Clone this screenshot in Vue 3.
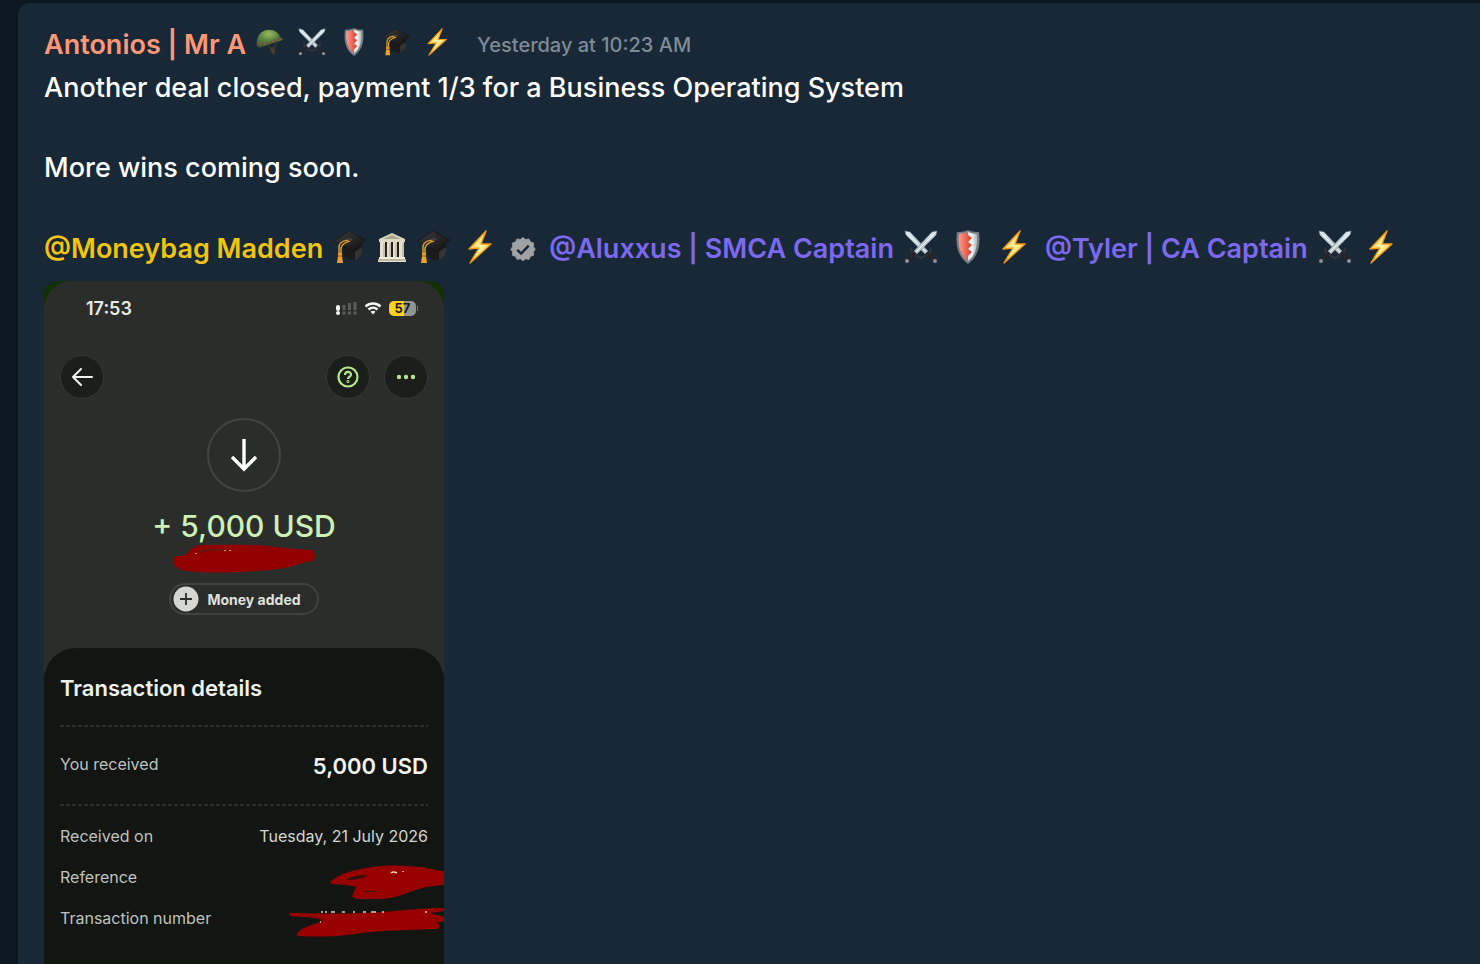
<template>
  <div class="chat">
    <!-- 图标定义 -->
    <svg class="sprite" aria-hidden="true">
      <defs>
        <linearGradient id="boltFill" x1="0" y1="0" x2="1" y2="1">
          <stop offset="0" stop-color="#ffb52b" />
          <stop offset="0.5" stop-color="#fff6a8" />
          <stop offset="1" stop-color="#ffb01e" />
        </linearGradient>
        <linearGradient id="bladeFill" x1="0" y1="0" x2="0" y2="1">
          <stop offset="0" stop-color="#d5e6ee" />
          <stop offset="1" stop-color="#b4bcc3" />
        </linearGradient>
        <linearGradient id="redFill" x1="0" y1="0" x2="1" y2="0">
          <stop offset="0" stop-color="#ff9a8c" />
          <stop offset="1" stop-color="#d93a2a" />
        </linearGradient>
        <linearGradient id="silverFill" x1="0" y1="0" x2="1" y2="0">
          <stop offset="0.3" stop-color="#b9bfc3" />
          <stop offset="0.7" stop-color="#f4f8fa" />
          <stop offset="1" stop-color="#a8b0b5" />
        </linearGradient>
        <linearGradient id="capFill" x1="0" y1="0" x2="1" y2="1">
          <stop offset="0" stop-color="#3b3b3b" />
          <stop offset="1" stop-color="#111" />
        </linearGradient>
        <radialGradient id="helmetFill" cx="0.45" cy="0.25" r="0.75">
          <stop offset="0" stop-color="#9dba66" />
          <stop offset="0.45" stop-color="#5c8740" />
          <stop offset="1" stop-color="#38592f" />
        </radialGradient>
      </defs>

      <symbol id="helmet" viewBox="0 0 34 34">
        <path d="M14 21l5 6M25 18l-4 9" stroke="#4a3c33" stroke-width="1.2" fill="none" />
        <path d="M17 24l4-1 2 4v4l-3 1-2-4z" fill="#4b3b32" />
        <path d="M1 21C0 10 6 2 16 2c7 0 12 4 13 9l4 3c-1 1-4 2-8 3-7 2-12 4-18 6-3 1-5 1-6-2z" fill="url(#helmetFill)" />
        <path d="M1 18c10 1 19-1 28-8l1 3c-8 6-18 9-29 8z" fill="#65563f" />
        <path d="M5 18l1 2M10 18l1 2M15 17l1 2M20 15l1 2M25 13l1 2" stroke="#8d7a5b" stroke-width="1" />
      </symbol>

      <symbol id="swords" viewBox="0 0 34 34">
        <path d="M7 18l1 5 5 3 4 2M27 18l-1 5-5 3-4 2" fill="none" stroke="#34343a" stroke-width="2.2" />
        <path d="M11 23l-8 8M23 23l8 8" stroke="#26252a" stroke-width="3.4" />
        <path d="M1 1l5 1 18 19-3 3L2 5z" fill="url(#bladeFill)" stroke="#7e8c97" stroke-width="0.5" />
        <path d="M2 2l20 20" stroke="#f6fbff" stroke-width="1" />
        <path d="M33 1l-5 1L10 21l3 3L32 5z" fill="url(#bladeFill)" stroke="#7e8c97" stroke-width="0.5" />
        <path d="M32 2L12 22" stroke="#f6fbff" stroke-width="1" />
        <circle cx="3" cy="31" r="2" fill="#918d92" />
        <circle cx="31" cy="31" r="2" fill="#918d92" />
      </symbol>

      <symbol id="shield" viewBox="0 0 34 34">
        <path d="M17 0c4 2 8 2 11 2 2 16-2 25-11 32C8 27 4 18 6 2c3 0 7 0 11-2z" fill="#777f82" />
        <path d="M17 2c3 1 6 2 9 2 1 14-2 21-9 27C10 25 7 18 8 4c3 0 6-1 9-2z" fill="url(#silverFill)" />
        <path d="M17 2v3l4 3-4 4 4 3-4 4 4 3-4 4v5C10 25 7 18 8 4c3 0 6-1 9-2z" fill="url(#redFill)" />
      </symbol>

      <symbol id="cap" viewBox="0 0 34 34">
        <path d="M10 16l19-2v9c-1 3-5 7-9 7-5 0-9-3-10-7z" fill="#1a1a1a" />
        <path d="M22 22l7-5v6c-1 3-4 6-7 7z" fill="#343434" />
        <path d="M16 1l17 9-13 11L1 11z" fill="url(#capFill)" stroke="#0c0c0c" stroke-width="0.5" />
        <path d="M17 10c-5 0-10 2-11 6v8M17 11c-4 1-8 3-9 7v6" fill="none" stroke="#d99b2c" stroke-width="1.5" />
        <ellipse cx="17" cy="9.5" rx="2.6" ry="1.4" fill="#3f3f3f" />
        <path d="M5 23h4v3l1 7H4l1-7z" fill="#ee9f28" />
        <path d="M5 26h4" stroke="#a35f11" stroke-width="1" />
      </symbol>

      <symbol id="bank" viewBox="0 0 34 34">
        <path d="M6 12h22v17H6z" fill="#25201b" />
        <path d="M17 3l13 6v3H4V9z" fill="#dcd8c1" />
        <path d="M17 5l9 4H8z" fill="#a9a489" />
        <path d="M5 12h5v16H5zM12 12h4v16h-4zM18 12h4v16h-4zM24 12h5v16h-5z" fill="#e4e0cc" />
        <path d="M9 13v14M15 13v14M21 13v14M28 13v14" stroke="#aaa58e" stroke-width="1" />
        <path d="M4 27h26v2H4z" fill="#f0edda" />
        <path d="M3 29h28v2H3z" fill="#bdb89f" />
        <path d="M3 31h28v1H3z" fill="#e6e2ce" />
      </symbol>

      <symbol id="bolt" viewBox="0 0 34 34">
        <path d="M22 1L5 19l10-1L6 33l21-19-10 0z" fill="url(#boltFill)" stroke="#f59a13" stroke-width="1.4" stroke-linejoin="round" />
      </symbol>

      <symbol id="verified" viewBox="0 0 34 34">
        <path
          d="M17 2l3.500 2.700 4.300-.9 2 3.900 4.200 1.500-.4 4.500L33 17.500l-2.400 3.300.4 4.300-4.200 1.600-2 4-4.300-.9L17 32.500l-3.500-2.700-4.300.9-2-4-4.200-1.600.4-4.300L1 17.500l2.400-3.800L3 9.200l4.200-1.500 2-3.900 4.300.9z"
          fill="#a0a2a4"
          stroke="#a0a2a4"
          stroke-linejoin="round"
        />
        <path d="M9.500 18l5 5L24.500 12.500" fill="none" stroke="#182837" stroke-width="3.200" />
      </symbol>
    </svg>

    <article class="message">
      <header class="message-header">
        <a href="#" class="author">Antonios | Mr A</a>
        <span class="badges">
          <svg v-for="icon in authorBadges" :key="icon" class="badge" aria-hidden="true">
            <use :href="`#${icon}`" />
          </svg>
        </span>
        <time class="timestamp">Yesterday at 10:23 AM</time>
      </header>

      <p class="line">Another deal closed, payment 1/3 for a Business Operating System</p>
      <p class="line spaced">More wins coming soon.</p>

      <!-- 提及的成员 -->
      <div class="mentions">
        <div v-for="user in mentions" :key="user.name" class="mention">
          <a href="#" :class="['mention-name', user.role]">{{ user.name }}</a>
          <div class="emoji-list">
            <span v-for="(group, g) in user.icons" :key="g" class="emoji-group">
              <svg v-for="(icon, i) in group" :key="i" class="emoji" :class="icon" aria-hidden="true">
                <use :href="`#${icon}`" />
              </svg>
            </span>
          </div>
        </div>
      </div>

      <!-- 手机截图附件 -->
      <section class="attachment">
        <div class="phone">
          <div class="status-bar">
            <span class="clock">17:53</span>
            <div class="status-icons">
              <svg width="21" height="14" viewBox="0 0 21 14">
                <path d="M2 6v2" stroke="#f5f5f5" stroke-width="4" stroke-linecap="round" />
                <circle cx="2" cy="12" r="2" fill="#f5f5f5" />
                <path d="M8 4v5M13.500 2v7M19 1v8M8 10.500v3M13.500 10.500v3M19 10.500v3" stroke="#5c5e5b" stroke-width="3" />
              </svg>
              <svg width="18" height="14" viewBox="0 0 18 14">
                <path d="M1.500 5.500c4.300-4 10.700-4 15 0M4.500 8.500c2.600-2.400 6.400-2.400 9 0" fill="none" stroke="#f5f5f5" stroke-width="2.400" />
                <path d="M6.500 10.800c1.500-1.300 3.500-1.300 5 0L9 13.500z" fill="#f5f5f5" />
              </svg>
              <span class="battery">57</span>
            </div>
          </div>

          <nav class="toolbar">
            <button type="button" class="round-button" aria-label="Back">
              <svg width="22" height="20" viewBox="0 0 22 20">
                <path d="M10 2l-8 8 8 8M2 10h19" fill="none" stroke="#f2f4f0" stroke-width="2" stroke-linecap="round" stroke-linejoin="round" />
              </svg>
            </button>
            <button type="button" class="round-button help" aria-label="Help">
              <svg width="22" height="22" viewBox="0 0 22 22" fill="none" stroke="#b5e68d" stroke-width="2.200">
                <circle cx="11" cy="11" r="9.500" />
                <path d="M8 9c0-4 6-4 6-.5 0 2.300-3 2.200-3 4.500" />
                <circle cx="11" cy="15.500" r="0.500" />
              </svg>
            </button>
            <button type="button" class="round-button" aria-label="More">
              <svg width="20" height="6" viewBox="0 0 20 6" fill="#b5e68d">
                <circle cx="3" cy="3" r="2.200" />
                <circle cx="10" cy="3" r="2.200" />
                <circle cx="17" cy="3" r="2.200" />
              </svg>
            </button>
          </nav>

          <div class="summary">
            <div class="direction">
              <svg width="28" height="34" viewBox="0 0 28 34">
                <path d="M14 1v30M2 19l12 12 12-12" fill="none" stroke="#fff" stroke-width="3.400" />
              </svg>
            </div>
            <div class="amount">+ 5,000 USD</div>
            <svg class="scribble" width="142" height="29" viewBox="0 0 142 29">
              <path
                d="M1 13c4-2 9 0 13-3 4-6 9-9 16-9 19 0 43-1 64 1 14 2 30 3 45 4 4 3 3 9 1 11-6 0-10 2-17 4-16 5-35 6-57 7-20 1-43 1-56-2C3 24-1 20 1 13z"
                fill="#930000"
              />
              <path d="M24 8c8-4 21-3 34-2-12 1-23 0-34 3z" fill="#5a1a10" />
              <path d="M23 9v1M52 6v1M57 6v1" stroke="#d8c7a8" stroke-width="1.500" />
            </svg>
            <div class="pill">
              <svg width="26" height="26" viewBox="0 0 26 26">
                <circle cx="13" cy="13" r="12.500" fill="#d5d7d4" />
                <path d="M13 7v12M7 13h12" stroke="#2c2e2b" stroke-width="1.800" />
              </svg>
              Money added
            </div>
          </div>

          <div class="sheet">
            <h2 class="sheet-title">Transaction details</h2>
            <hr class="divider" />
            <dl class="received">
              <dt>You received</dt>
              <dd>5,000 USD</dd>
            </dl>
            <hr class="divider" />
            <dl class="details">
              <div class="detail-row">
                <dt>Received on</dt>
                <dd>Tuesday, 21 July 2026</dd>
              </div>
              <div class="detail-row">
                <dt>Reference</dt>
                <dd class="redacted">
                  <svg width="114" height="34" viewBox="0 0 114 34">
                    <path
                      d="M1 16C10 8 27 4 43 2c22-3 42-1 54 1 6 2 13 3 17 3v14c-8 1-16 1-22 3-12 3-24 10-39 11-10 1-21 1-30-1-2-4 2-7 3-11-8-3-17-2-24-3-2-1-2-2-1-3z"
                      fill="#980000"
                    />
                    <path d="M16 15c5-4 13-5 22-5-6 4-14 5-22 5z" fill="#2b120d" />
                    <path d="M33 27c4-2 10-1 16-1-6 2-11 1-16 1z" fill="#4e0d08" />
                    <path d="M61 8c2-2 4-1 6 0M73 6v1" stroke="#e4d8c4" stroke-width="1.500" fill="none" />
                  </svg>
                </dd>
              </div>
              <div class="detail-row">
                <dt>Transaction number</dt>
                <dd class="redacted">
                  <svg width="156" height="34" viewBox="0 0 156 34">
                    <path
                      d="M1 8c1-2 4-1 7-1 30 1 65 1 98-2 14-1 33-3 50-3v3l-14 2 14 4v4l-8 2c5 1 4 6 1 6-28 1-58 1-83 5-17 3-38 3-56 2-3-2 2-6 6-8 6-3 13-4 18-8-8-4-22-2-32-4z"
                      fill="#980000"
                    />
                    <path d="M33 6h2M37 6h2M43 6h4M54 6h3M65 6h2M75 6h3M83 6h5M94 6h2M137 6h2M32 16h1" stroke="#d9cdbb" stroke-width="1.500" />
                  </svg>
                </dd>
              </div>
            </dl>
          </div>
        </div>
      </section>
    </article>
  </div>
</template>

<script setup>
// 作者徽章
const authorBadges = ['helmet', 'swords', 'shield', 'cap', 'bolt'];

// 提及列表，图标按间距分组
const mentions = [
  { name: '@Moneybag Madden', role: 'gold', icons: [['cap', 'bank', 'cap'], ['bolt', 'verified']] },
  { name: '@Aluxxus | SMCA Captain', role: 'violet', icons: [['swords'], ['shield'], ['bolt']] },
  { name: '@Tyler | CA Captain', role: 'violet', icons: [['swords'], ['bolt']] }
];
</script>

<style>
body {
  margin: 0;
  background: #0c1722;
}
</style>

<style scoped>
.chat {
  box-sizing: border-box;
  min-height: 100vh;
  padding: 3px 0 0 18px;
  display: flex;
  background: #0c1722;
  font-family: Inter, "Liberation Sans", sans-serif;
  color: #fff;
}

.sprite {
  position: absolute;
  width: 0;
  height: 0;
}

.message {
  flex: 1;
  min-width: 0;
  display: flex;
  flex-direction: column;
  padding: 20px 26px 0;
  background: #182837;
  border-top-left-radius: 12px;
}

.message-header {
  display: flex;
  align-items: center;
  height: 42px;
  margin-bottom: 3px;
}

.author {
  font-size: 27px;
  font-weight: 600;
  color: #ff9776;
  text-decoration: none;
  white-space: nowrap;
}

.badges {
  display: flex;
  gap: 14px;
  margin: 0 25px 4px 10px;
}

.badge {
  width: 28px;
  height: 28px;
}

.timestamp {
  padding-top: 2px;
  font-size: 20px;
  font-weight: 500;
  color: #7f8b95;
}

.line {
  margin: 0;
  font-size: 27px;
  font-weight: 500;
  line-height: 40px;
}

.spaced {
  margin: 40px 0;
}

.mentions {
  display: flex;
  gap: 13px;
}

.mention {
  display: flex;
  align-items: center;
  height: 40px;
  gap: 10px;
}

.mention-name {
  font-size: 27px;
  font-weight: 600;
  text-decoration: none;
  white-space: nowrap;
}

.gold {
  color: #f1c40f;
}

.violet {
  color: #7d69f0;
}

.emoji-list {
  display: flex;
  gap: 13px;
  padding-bottom: 3px;
}

.emoji-group {
  display: flex;
  align-items: center;
  gap: 8px;
}

.emoji {
  width: 34px;
  height: 34px;
}

.emoji.verified {
  box-sizing: border-box;
  width: 30px;
  height: 30px;
  padding: 4px 0 0 4px;
}

.attachment {
  flex: 1;
  display: flex;
  width: 400px;
  max-width: 100%;
  margin-top: 13px;
  background: #123000;
  border-radius: 14px 14px 0 0;
  overflow: hidden;
}

.phone {
  flex: 1;
  display: flex;
  flex-direction: column;
  background: #2b2d2a;
  border-radius: 28px 28px 0 0;
}

.status-bar {
  display: flex;
  justify-content: space-between;
  align-items: center;
  height: 54px;
  padding: 0 26px 0 42px;
}

.clock {
  font-size: 18px;
  font-weight: 600;
  color: #e8eae6;
}

.status-icons {
  display: flex;
  align-items: center;
  gap: 7px;
}

.battery {
  position: relative;
  width: 27px;
  height: 15px;
  margin-right: 2px;
  border-radius: 5px;
  background: linear-gradient(90deg, #ffd21f 57%, #929491 57%);
  color: #1c1c14;
  font-size: 13px;
  font-weight: 700;
  line-height: 15px;
  text-align: center;
}

.battery::after {
  content: "";
  position: absolute;
  top: 5px;
  right: -2px;
  width: 1px;
  height: 5px;
  background: #747673;
}

.toolbar {
  display: flex;
  gap: 14px;
  padding: 20px 16px 0;
}

.round-button {
  box-sizing: border-box;
  display: flex;
  align-items: center;
  justify-content: center;
  width: 44px;
  height: 44px;
  padding: 0;
  border: 1px solid #353734;
  border-radius: 50%;
  background: #1c1e1b;
  cursor: pointer;
}

.round-button.help {
  margin-left: auto;
}

.summary {
  display: flex;
  flex-direction: column;
  align-items: center;
  padding: 19px 0 33px;
}

.direction {
  box-sizing: border-box;
  display: flex;
  align-items: center;
  justify-content: center;
  width: 74px;
  height: 74px;
  border: 2px solid #434542;
  border-radius: 50%;
}

.amount {
  margin-top: 16px;
  font-size: 30px;
  font-weight: 500;
  line-height: 36px;
  color: #cdf0b5;
}

.scribble {
  margin-bottom: 10px;
}

.pill {
  box-sizing: border-box;
  display: flex;
  align-items: center;
  gap: 8px;
  height: 32px;
  padding: 0 16px 0 2px;
  border: 2px solid #414340;
  border-radius: 16px;
  font-size: 14px;
  font-weight: 700;
  color: #dfe1dd;
}

.sheet {
  flex: 1;
  padding: 24px 16px 16px;
  border-radius: 32px 32px 0 0;
  background: #121512;
}

.sheet-title {
  margin: 0 0 21px;
  font-size: 22px;
  font-weight: 600;
  line-height: 32px;
  color: #eef0ec;
}

.divider {
  height: 2px;
  margin: 0;
  border: 0;
  background: repeating-linear-gradient(90deg, #2c2f2c 0 4px, transparent 4px 6px);
}

.received {
  display: flex;
  align-items: center;
  justify-content: space-between;
  height: 77px;
  margin: 0;
}

.received dt {
  padding-bottom: 4px;
}

.received dd {
  margin: 0;
  font-size: 22px;
  font-weight: 600;
  color: #f2f4f0;
}

.details {
  margin: 9px 0 0;
}

.detail-row {
  display: flex;
  align-items: center;
  justify-content: space-between;
  height: 41px;
}

dt {
  font-size: 16px;
  color: #bfc2be;
}

.detail-row dd {
  margin: 0;
  font-size: 16px;
  color: #d3d5d1;
}

.detail-row .redacted {
  display: flex;
  margin: 10px -16px 0 0;
}
</style>
